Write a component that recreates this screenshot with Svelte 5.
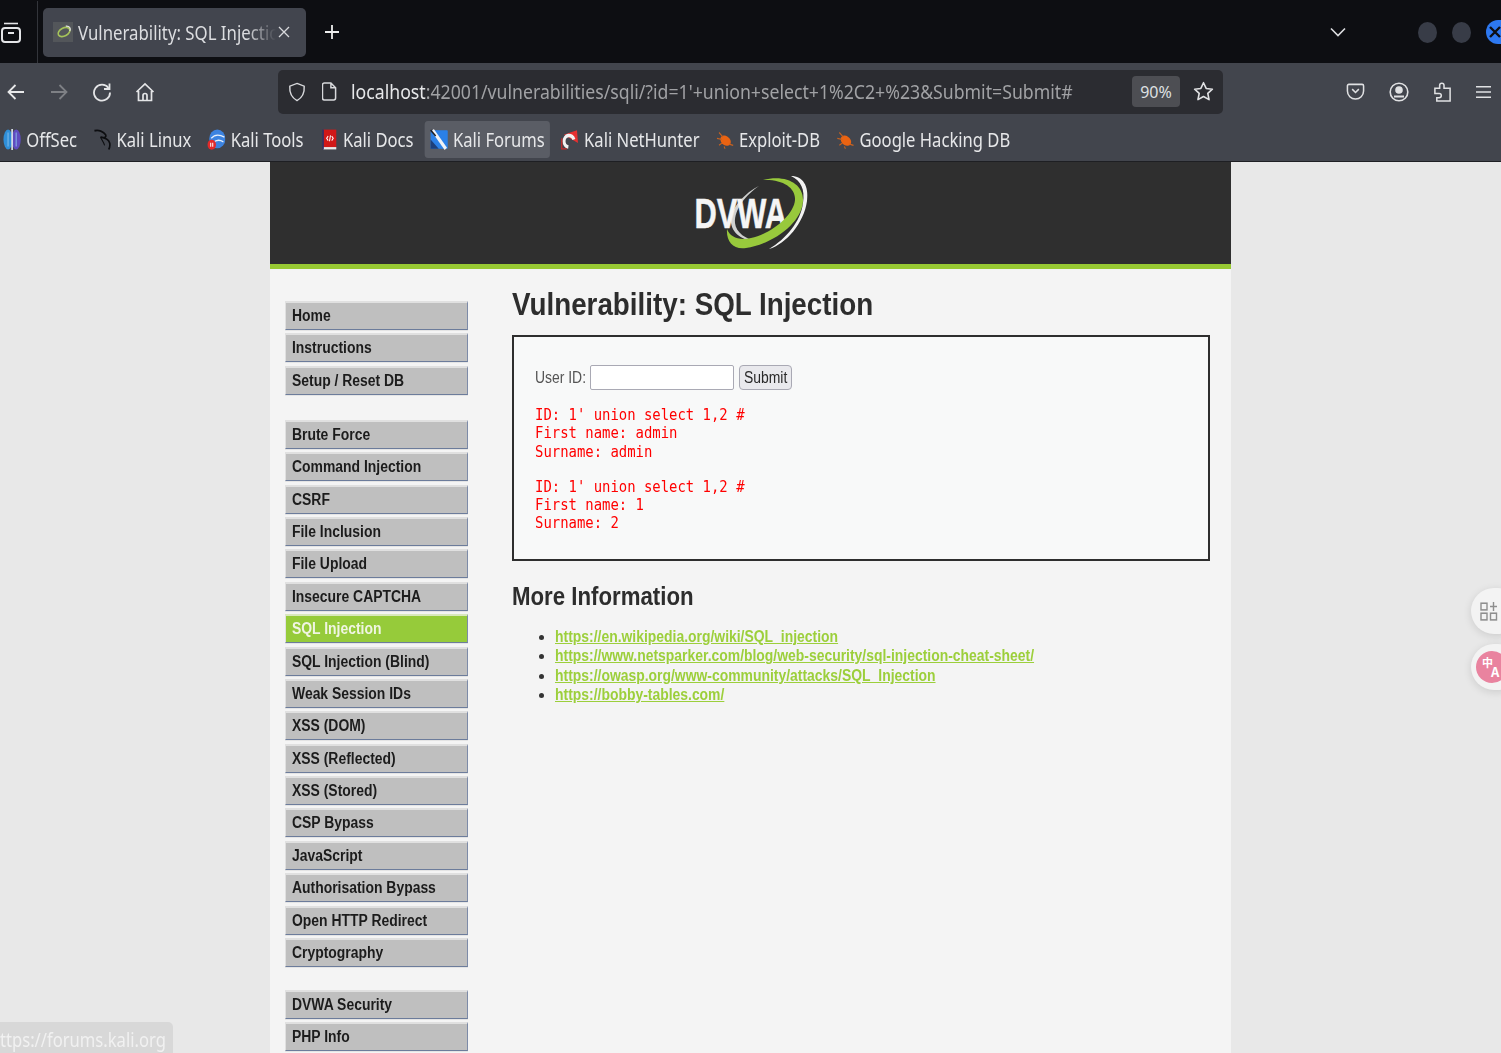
<svelte:options runes={false} />

<script>
  const bookmarks = [
    { name: 'OffSec', icon: 'offsec' },
    { name: 'Kali Linux', icon: 'dragon' },
    { name: 'Kali Tools', icon: 'tools' },
    { name: 'Kali Docs', icon: 'docs' },
    { name: 'Kali Forums', icon: 'forums', active: true },
    { name: 'Kali NetHunter', icon: 'nethunter' },
    { name: 'Exploit-DB', icon: 'bug' },
    { name: 'Google Hacking DB', icon: 'bug' },
  ];

  const menuGroups = [
    ['Home', 'Instructions', 'Setup / Reset DB'],
    ['Brute Force', 'Command Injection', 'CSRF', 'File Inclusion', 'File Upload', 'Insecure CAPTCHA', 'SQL Injection',
     'SQL Injection (Blind)', 'Weak Session IDs', 'XSS (DOM)', 'XSS (Reflected)', 'XSS (Stored)', 'CSP Bypass',
     'JavaScript', 'Authorisation Bypass', 'Open HTTP Redirect', 'Cryptography'],
    ['DVWA Security', 'PHP Info'],
  ];

  const links = [
    'https://en.wikipedia.org/wiki/SQL_injection',
    'https://www.netsparker.com/blog/web-security/sql-injection-cheat-sheet/',
    'https://owasp.org/www-community/attacks/SQL_Injection',
    'https://bobby-tables.com/',
  ];
</script>

<div class="screen">
  <header class="browser">
    <div class="tabbar">
      <svg class="tabs-btn" viewBox="0 0 22 24" width="22" height="24" fill="none" stroke="#e4e5e8" stroke-width="2">
        <path d="M4 3.500h14" stroke-width="1.600" />
        <rect x="2" y="8" width="18" height="14" rx="3" />
        <path d="M8 13h6" />
      </svg>
      <div class="tab-sep"></div>
      <div class="tab">
        <span class="tab-favicon">
          <svg viewBox="0 0 20 20" width="20" height="20" fill="none">
            <ellipse cx="10" cy="10" rx="7" ry="4.500" stroke="#a6c45a" stroke-width="1.800" transform="rotate(-28 10 10)" />
            <path d="M12 3.500C16 3 18 6 16.500 9" stroke="#e2e2e2" stroke-width="1.300" />
          </svg>
        </span>
        <span class="tab-title"><span class="tab-title-text">Vulnerability: SQL Injectio</span></span>
        <svg viewBox="0 0 12 12" width="12" height="12" stroke="#d8d9dc" stroke-width="1.300"><path d="M1 1l10 10M11 1L1 11" /></svg>
      </div>
      <svg class="new-tab" viewBox="0 0 16 16" width="16" height="16" stroke="#eceded" stroke-width="1.800"><path d="M8 1v14M1 8h14" /></svg>
      <div class="tabbar-right">
        <svg viewBox="0 0 16 10" width="16" height="10" fill="none" stroke="#dcdde0" stroke-width="1.600"><path d="M1 1.500l7 7 7-7" /></svg>
        <span class="win-dot win-first"></span>
        <span class="win-dot"></span>
        <span class="win-close">
          <svg viewBox="0 0 12 12" width="12" height="12" stroke="#0d0e12" stroke-width="2.400"><path d="M1 1l10 10M11 1L1 11" /></svg>
        </span>
      </div>
    </div>

    <div class="navbar">
      <svg class="nav-icon" viewBox="0 0 20 20" width="20" height="20" fill="none" stroke="#e8e9ea" stroke-width="1.800"><path d="M18 10H2.500M9.500 3L2.500 10l7 7" /></svg>
      <svg class="nav-icon" viewBox="0 0 20 20" width="20" height="20" fill="none" stroke="#7e8085" stroke-width="1.800"><path d="M2 10h15.500M10.500 3l7 7-7 7" /></svg>
      <svg class="nav-icon" viewBox="0 0 20 20" width="20" height="20" fill="none" stroke="#e4e5e7" stroke-width="1.800"><path d="M16.500 6A8 8 0 1 0 18 10.500" /><path d="M17.500 1.500v5.500h-5.500" /></svg>
      <svg class="nav-icon home-icon" viewBox="0 0 20 20" width="20" height="20" fill="none" stroke="#e4e5e7" stroke-width="1.700"><path d="M1.500 10L10 2l8.500 8M3.500 9v9.500h13V9" /><path d="M8 18.500v-5a2 2 0 0 1 4 0v5" /></svg>

      <div class="urlbar">
        <svg viewBox="0 0 20 22" width="18" height="22" fill="none" stroke="#d8d9dc" stroke-width="1.600"><path d="M10 1.500L18 4.500c.5 7-1.500 12.500-8 16-6.500-3.500-8.500-9-8-16z" /></svg>
        <svg class="page-icon" viewBox="0 0 16 20" width="15" height="19" fill="none" stroke="#d8d9dc" stroke-width="1.600"><path d="M2.500 1h7l5 5v11a2 2 0 0 1-2 2h-10a2 2 0 0 1-2-2V3a2 2 0 0 1 2-2zM9.500 1v5h5" /></svg>
        <span class="url"><span class="url-text"><span class="url-host">localhost</span>:42001/vulnerabilities/sqli/?id=1'+union+select+1%2C2+%23&amp;Submit=Submit#</span></span>
        <span class="zoom-pill">90%</span>
        <svg class="star" viewBox="0 0 22 22" width="21" height="21" fill="none" stroke="#e0e1e3" stroke-width="1.700" stroke-linejoin="round"><path d="M11 1.800l2.800 6 6.500.8-4.800 4.400 1.300 6.500-5.800-3.300-5.800 3.300 1.300-6.500L1.700 8.600l6.500-.8z" /></svg>
      </div>

      <div class="nav-right">
        <svg viewBox="0 0 20 20" width="19" height="19" fill="none" stroke="#e0e1e3" stroke-width="1.600"><path d="M3 2.500h14a1.500 1.500 0 0 1 1.500 1.500v5.500a8.500 8.500 0 0 1-17 0V4A1.500 1.500 0 0 1 3 2.500z" /><path d="M6.500 7.500L10 11l3.500-3.500" /></svg>
        <svg viewBox="0 0 20 20" width="20" height="20" fill="none" stroke="#e0e1e3" stroke-width="1.600"><circle cx="10" cy="10" r="8.800" /><circle cx="10" cy="8" r="3" fill="#e0e1e3" /><path d="M5 14.500h10" stroke-width="2" /></svg>
        <svg viewBox="0 0 20 22" width="19" height="22" fill="none" stroke="#e0e1e3" stroke-width="1.600"><path d="M2 7h5V4a2.300 2.300 0 0 1 4.600 0v3H18v13.500H4V17h2.500a2.200 2.200 0 0 0 0-4.500H2z" /></svg>
        <svg viewBox="0 0 16 14" width="15" height="14" stroke="#e0e1e3" stroke-width="1.600"><path d="M0 1.500h16M0 7h16M0 12.500h16" /></svg>
      </div>
    </div>

    <nav class="bookmarks">
      <div class="bookmarks-row">
        {#each bookmarks as b}
          <div class="bookmark" class:active={b.active}>
            <svg class="bm-icon" viewBox="0 0 18 18" width="22" height="21" preserveAspectRatio="none" fill="none">
              {#if b.icon === 'offsec'}
                <ellipse cx="5" cy="9" rx="4.500" ry="8.500" fill="#2f8fd8" />
                <ellipse cx="13" cy="9" rx="4.500" ry="8.500" fill="#5f4cc0" />
                <path d="M9 0v18" stroke="#dfe6ee" stroke-width="1.600" />
                <path d="M5 3v12M13 3v12" stroke="#8fc6ee" stroke-width=".8" />
              {:else if b.icon === 'dragon'}
                <path d="M1 1.500C5 .5 10 2 12 5c1 2-1 3-5 2 4 .5 8 2 9 5 .5 2 0 4-1 5.500" stroke="#0c0d10" stroke-width="1.600" />
                <path d="M7 7c1 2 3 4 4 7" stroke="#0c0d10" stroke-width="1" />
              {:else if b.icon === 'tools'}
                <circle cx="10" cy="8.500" r="8" fill="#3c83e0" />
                <path d="M4 8c3-3 7-4 13-1M6 12c3-3 6-3 10-1" stroke="#e8f0fb" stroke-width="1.200" />
                <circle cx="4.500" cy="13.500" r="4.200" fill="#e32a2a" />
                <path d="M3.500 11.800v3.400M5.500 11.800v3.400" stroke="#fff" stroke-width="1" />
              {:else if b.icon === 'docs'}
                <rect x="3" y="0.500" width="13" height="15.500" fill="#d01818" />
                <rect x="3" y="15.500" width="13" height="2" fill="#e9e9e9" />
                <path d="M3 .5v17" stroke="#30306a" stroke-width="1.500" />
                <path d="M8 6L6.500 8 8 10M11.500 6L13 8l-1.500 2M10.300 5.500L9.300 10.500" stroke="#fff" stroke-width="1" />
              {:else if b.icon === 'forums'}
                <rect x="1" y="1" width="17" height="16" rx="1" fill="#2a80e8" />
                <path d="M1 9l8 8H1z" fill="#1d3f7a" />
                <path d="M3 1l13 16" stroke="#f0f2f5" stroke-width="3" />
                <path d="M1 1l5 5" stroke="#1b1c22" stroke-width="1.500" />
              {:else if b.icon === 'nethunter'}
                <path d="M3 5L16 1l1 11z" fill="#e63030" />
                <path d="M7.500 15.500A5 5 0 1 1 13 9" stroke="#f2f2f2" stroke-width="3" />
                <path d="M1 8v9h5" stroke="#c92929" stroke-width="1.200" />
              {:else}
                <ellipse cx="9.500" cy="10" rx="5.500" ry="4" fill="#ea6312" transform="rotate(30 9.500 10)" />
                <path d="M3 3l4 4M1 8l5 1M3 14l3-2M13 13l4 1M8 15l1 2" stroke="#c9621f" stroke-width="1" />
              {/if}
            </svg>
            <span>{b.name}</span>
          </div>
        {/each}
      </div>
    </nav>
  </header>

  <div class="viewport">
    <div class="page">
      <div class="page-header">
        <svg class="logo" viewBox="690 172 120 80" width="120" height="80">
          <path d="M758 185C745 191 728 208 730 222C732 235 745 240 757 241C745 238 735 232 734 222C733 208 746 193 758 185Z" fill="#cfd0cf" />
          <text class="logo-text" transform="translate(693.500 227) scale(.735 1)">DVWA</text>
          <path d="M762 179C785 173 803 183 802 200C801 222 772 243 745 247C732 249 725 240 726 228C729 236 738 240 750 237C770 233 793 214 794 199C795 187 782 178 762 179Z" fill="#98c93c" />
          <path d="M790 175C802 175 808 185 806 200C803 222 785 243 768 248C785 238 800 220 802 202C804 188 800 180 790 175Z" fill="#f2f2f2" />
        </svg>
      </div>

      <div class="page-body">
        <aside class="sidebar">
          {#each menuGroups as group}
            <ul class="menu">
              {#each group as item}
                <li class="menu-item" class:selected={item === 'SQL Injection'}><span class="sq">{item}</span></li>
              {/each}
            </ul>
          {/each}
        </aside>

        <main class="main">
          <h1>Vulnerability: SQL Injection</h1>
          <div class="vuln-box">
            <form class="id-form" on:submit|preventDefault>
              <label for="uid"><span class="sq">User ID:</span></label>
              <input id="uid" type="text" />
              <button type="submit"><span class="sq">Submit</span></button>
            </form>
            <pre class="result">ID: 1' union select 1,2 #
First name: admin
Surname: admin</pre>
            <pre class="result">ID: 1' union select 1,2 #
First name: 1
Surname: 2</pre>
          </div>
          <h2>More Information</h2>
          <ul class="links">
            {#each links as l}
              <li><a class="sq" href={l}>{l}</a></li>
            {/each}
          </ul>
        </main>
      </div>
    </div>

    <div class="status-tip"><span class="status-text">ttps://forums.kali.org</span></div>

    <div class="float-btn float-apps">
      <svg viewBox="0 0 18 18" width="18" height="20" preserveAspectRatio="none" fill="none" stroke="#8e8e8e" stroke-width="1.400">
        <rect x="1" y="2" width="6" height="6" /><rect x="1" y="11" width="6" height="6" /><rect x="10.500" y="11" width="6" height="6" />
        <path d="M13.500 1v8M10 5h7" />
      </svg>
    </div>
    <div class="float-btn float-translate">
      <span class="translate-badge"><span class="zh">中</span><span class="en">A</span></span>
    </div>
  </div>
</div>

<style>
  :global(html), :global(body) { margin: 0; overflow: hidden; }

  .screen {
    width: 1501px;
    height: 1053px;
    display: flex;
    flex-direction: column;
    overflow: hidden;
    font-family: "Liberation Sans", Arial, sans-serif;
  }

  /* the shot is squeezed horizontally, text has to follow */
  .sq { display: inline-block; transform: scaleX(.87); transform-origin: 0 50%; white-space: nowrap; }

  /* browser chrome */
  .browser { font-family: "Noto Sans", sans-serif; color: #e6e7e9; flex-shrink: 0; }
  .tabbar {
    height: 63px;
    background: #0d0e12;
    display: flex;
    align-items: center;
    box-sizing: border-box;
    padding-top: 1px;
  }
  .tabs-btn { flex-shrink: 0; }
  .tab-sep { width: 1px; height: 62px; background: #33353b; margin: 0 5px 0 15px; }
  .tab {
    width: 263px;
    height: 49px;
    box-sizing: border-box;
    background: #42454e;
    border-radius: 5px;
    display: flex;
    align-items: center;
    padding: 0 13px 0 10px;
  }
  .tab-favicon { width: 20px; height: 20px; background: #53565a; flex-shrink: 0; display: flex; }
  .tab-title {
    margin-left: 5px;
    width: 198px;
    flex-shrink: 0;
    white-space: nowrap;
    font-size: 20px;
    color: #dcdde0;
    -webkit-mask-image: linear-gradient(90deg, #000 85%, transparent 100%);
    mask-image: linear-gradient(90deg, #000 85%, transparent 100%);
  }
  .tab-title-text { display: inline-block; transform: scaleX(.84); transform-origin: 0 50%; }
  .tab svg:last-child { margin-left: 2px; }
  .new-tab { margin-left: 18px; }
  .tabbar-right { margin-left: auto; display: flex; align-items: center; }
  .win-dot { width: 19px; height: 21px; border-radius: 50%; background: #383c47; margin-right: 15px; }
  .win-first { margin-left: 72px; }
  .win-close {
    width: 15px;
    height: 24px;
    border-radius: 12px 0 0 12px;
    background: #2d78f0;
    display: flex;
    align-items: center;
    padding-left: 3px;
    box-sizing: border-box;
    overflow: hidden;
  }

  .navbar {
    height: 57px;
    background: #42454d;
    display: flex;
    align-items: center;
    padding-left: 6px;
    box-sizing: border-box;
  }
  .nav-icon { margin-right: 23px; flex-shrink: 0; }
  .home-icon { margin-right: 123px; }
  .urlbar {
    width: 945px;
    height: 44px;
    background: #2b2c31;
    border-radius: 5px;
    display: flex;
    align-items: center;
    padding: 0 9px 0 10px;
    box-sizing: border-box;
    flex-shrink: 0;
  }
  .page-icon { margin-left: 16px; flex-shrink: 0; }
  .url {
    margin-left: 14px;
    width: 730px;
    font-size: 20px;
    white-space: nowrap;
    color: #a1a2a5;
  }
  .url-text { display: inline-block; transform: scaleX(.884); transform-origin: 0 50%; }
  .url-host { color: #e6e7e9; }
  .zoom-pill {
    margin-left: auto;
    width: 48px;
    height: 31px;
    background: #4d4e53;
    border-radius: 4px;
    font-size: 16px;
    display: flex;
    align-items: center;
    justify-content: center;
    color: #dfe0e2;
  }
  .star { margin-left: 13px; flex-shrink: 0; }
  .nav-right {
    margin-left: 123px;
    display: flex;
    align-items: center;
    gap: 24px;
  }

  .bookmarks {
    height: 41px;
    background: #42454d;
    border-bottom: 1px solid #1e1f23;
    overflow: hidden;
  }
  .bookmarks-row {
    display: flex;
    width: max-content;
    gap: 7.500px;
    margin-left: -2.400px;
    transform: scaleX(.83);
    transform-origin: 0 0;
  }
  .bookmark {
    height: 37px;
    display: flex;
    align-items: center;
    padding: 0 6px;
    gap: 6px;
    font-size: 20px;
    border-radius: 4px;
    white-space: nowrap;
    margin-top: 1px;
  }
  .bookmark.active { background: #5a5d65; }
  .bm-icon { flex-shrink: 0; }

  /* page */
  .viewport {
    position: relative;
    flex: 1;
    background: #e8e8e8;
    overflow: hidden;
  }
  .page { width: 961px; margin: 0 auto; background: #f4f4f4; height: 100%; }
  .page-header {
    height: 102px;
    background: #2f2f2f;
    border-bottom: 5px solid #98c933;
    display: flex;
    justify-content: center;
    align-items: center;
  }
  .logo { display: block; }
  .logo-text { font: bold 42px "Liberation Sans", sans-serif; fill: #f5f5f5; stroke: #f5f5f5; stroke-width: .5px; }

  .page-body { display: flex; padding: 32px 21px 0 15px; }
  .sidebar { width: 183px; flex-shrink: 0; }
  .menu { list-style: none; margin: 0 0 25px; padding: 0; display: flex; flex-direction: column; gap: 3.400px; }
  .menu:nth-child(2) { margin-bottom: 23px; }
  .menu-item {
    height: 29px;
    box-sizing: border-box;
    background: #bfbfbf;
    border-top: 2px solid #e0e0e0;
    border-left: 1px solid #e0e0e0;
    border-right: 1px solid #7d8ba8;
    border-bottom: 1px solid #6c7c9b;
    box-shadow: 0 1px 0 #e4e4e4;
    padding-left: 6px;
    font-size: 16px;
    font-weight: 700;
    line-height: 25px;
    color: #1c1c1c;
  }
  .menu-item.selected { background: #96cb3a; color: #f0f5e2; border-top-color: #d9e8bc; }

  .main { margin-left: 44px; flex: 1; color: #333; min-width: 0; }
  h1 {
    margin: -17px 0 0;
    font-size: 32px;
    line-height: 40px;
    font-weight: 700;
    color: #2d2d2d;
    white-space: nowrap;
    transform: scaleX(.868);
    transform-origin: 0 50%;
  }
  .vuln-box {
    margin-top: 11px;
    height: 226px;
    box-sizing: border-box;
    border: 2px solid #2e2e2e;
    background: #f8f9f9;
    padding: 28px 21px 0;
  }
  .id-form { display: flex; align-items: center; height: 25px; font-size: 16px; color: #555; }
  label { width: 55px; flex-shrink: 0; }
  input {
    width: 144px;
    height: 25px;
    box-sizing: border-box;
    margin: 0;
    border: 1px solid #a9a9b4;
    border-radius: 2px;
    background: #fff;
    padding: 0;
  }
  button {
    margin-left: 5px;
    width: 53px;
    height: 25px;
    padding: 0 0 0 4px;
    border: 1px solid #a9a9b4;
    border-radius: 4px;
    background: #e9e9ed;
    color: #2a2a2a;
    text-align: left;
    font: 16px "Liberation Sans", sans-serif;
    overflow: hidden;
  }
  .result {
    margin: 16px 0 0;
    font: 16px/18.300px "DejaVu Sans Mono", monospace;
    color: #f00;
    transform: scaleX(.87);
    transform-origin: 0 50%;
  }
  .result + .result { margin-top: 17px; }
  h2 {
    margin: 20px 0 0;
    font-size: 26px;
    line-height: 30px;
    font-weight: 700;
    color: #2d2d2d;
    white-space: nowrap;
    transform: scaleX(.855);
    transform-origin: 0 50%;
  }
  .links { margin: 16px 0 0; padding: 0 0 0 43px; font-size: 16px; line-height: 19.400px; }
  .links a { color: #9ccf3b; font-weight: 700; text-decoration: underline; }
  .links li { color: #333; }

  /* overlays */
  .status-tip {
    position: absolute;
    left: 0;
    bottom: 0;
    width: 173px;
    height: 31px;
    background: #d8d8d8;
    border-radius: 0 5px 0 0;
    color: #f1f1f1;
    font: 20px/35px "Noto Sans", sans-serif;
    white-space: nowrap;
    overflow: hidden;
  }
  .status-text { display: inline-block; transform: scaleX(.83); transform-origin: 0 50%; }
  .float-btn {
    position: absolute;
    left: 1471px;
    width: 50px;
    height: 46px;
    border-radius: 23px;
    background: #f3f3f3;
    box-shadow: 0 2px 8px rgba(0, 0, 0, 0.12);
    display: flex;
    align-items: center;
    padding-left: 9px;
    box-sizing: border-box;
  }
  .float-apps { top: 426px; }
  .float-translate { top: 482px; padding-left: 5px; }
  .translate-badge {
    width: 32px;
    height: 32px;
    border-radius: 50%;
    background: #e9839f;
    color: #fff;
    display: flex;
    padding: 5px 0 5px 6px;
    box-sizing: border-box;
    font-family: "Noto Sans CJK SC", "Noto Sans", sans-serif;
    font-weight: 700;
    flex-shrink: 0;
    overflow: hidden;
  }
  .zh { font-size: 11px; line-height: 12px; }
  .en { font-size: 13px; line-height: 12px; align-self: flex-end; margin-left: -2px; }
</style>
